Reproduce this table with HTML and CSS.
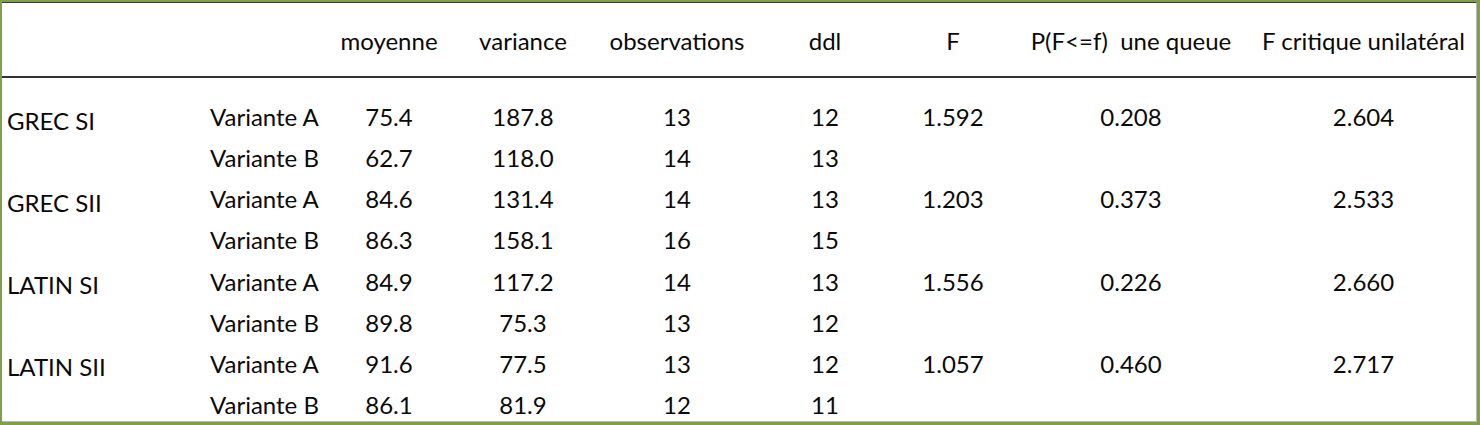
FILE: index.html
```html
<!DOCTYPE html>
<html lang="fr">
<head>
<meta charset="utf-8">
<link rel="stylesheet" href="styles.css">
</head>
<body>
<div class="frame">
  <div class="inner">
    <div class="head">
      <div class="c"></div>
      <div class="c"></div>
      <div class="c num">moyenne</div>
      <div class="c num">variance</div>
      <div class="c num">observations</div>
      <div class="c num">ddl</div>
      <div class="c num">F</div>
      <div class="c num">P(F&lt;=f)&nbsp; une queue</div>
      <div class="c num">F critique unilatéral</div>
    </div>
    <div class="body">
      <div class="c grp">GREC SI</div><div class="c">Variante A</div><div class="c num">75.4</div><div class="c num">187.8</div><div class="c num">13</div><div class="c num">12</div><div class="c num">1.592</div><div class="c num">0.208</div><div class="c num">2.604</div>
      <div class="c"></div><div class="c">Variante B</div><div class="c num">62.7</div><div class="c num">118.0</div><div class="c num">14</div><div class="c num">13</div><div class="c"></div><div class="c"></div><div class="c"></div>
      <div class="c grp">GREC SII</div><div class="c">Variante A</div><div class="c num">84.6</div><div class="c num">131.4</div><div class="c num">14</div><div class="c num">13</div><div class="c num">1.203</div><div class="c num">0.373</div><div class="c num">2.533</div>
      <div class="c"></div><div class="c">Variante B</div><div class="c num">86.3</div><div class="c num">158.1</div><div class="c num">16</div><div class="c num">15</div><div class="c"></div><div class="c"></div><div class="c"></div>
      <div class="c grp">LATIN SI</div><div class="c">Variante A</div><div class="c num">84.9</div><div class="c num">117.2</div><div class="c num">14</div><div class="c num">13</div><div class="c num">1.556</div><div class="c num">0.226</div><div class="c num">2.660</div>
      <div class="c"></div><div class="c">Variante B</div><div class="c num">89.8</div><div class="c num">75.3</div><div class="c num">13</div><div class="c num">12</div><div class="c"></div><div class="c"></div><div class="c"></div>
      <div class="c grp">LATIN SII</div><div class="c">Variante A</div><div class="c num">91.6</div><div class="c num">77.5</div><div class="c num">13</div><div class="c num">12</div><div class="c num">1.057</div><div class="c num">0.460</div><div class="c num">2.717</div>
      <div class="c"></div><div class="c">Variante B</div><div class="c num">86.1</div><div class="c num">81.9</div><div class="c num">12</div><div class="c num">11</div><div class="c"></div><div class="c"></div><div class="c"></div>
    </div>
  </div>
</div>
</body>
</html>
```
FILE: styles.css
```css
html, body {
  margin: 0;
  padding: 0;
  background: #ffffff;
}
.frame {
  width: 1480px;
  height: 425px;
  box-sizing: border-box;
  border-style: solid;
  border-color: #7fa046;
  border-width: 2px 3px 3px 2px;
  overflow: hidden;
  font-family: "Lato", "Liberation Sans", sans-serif;
  font-size: 24px;
  color: #0a0a0a;
}
.inner {
  height: 100%;
  box-sizing: border-box;
  border-top: 1px solid #3a3a3a;
  border-right: 1px solid #b8b8b8;
  border-bottom: 1px solid #b8b8b8;
  overflow: hidden;
}
.head, .body {
  display: grid;
  grid-template-columns: 208px 120px 118px 150px 158px 138px 118px 238px 227px;
}
.head {
  height: 75px;
  box-sizing: border-box;
  padding-top: 2px;
  border-bottom: 2px solid #333333;
}
.body {
  padding-top: 18px;
  grid-auto-rows: 41.15px;
}
.c {
  display: flex;
  align-items: center;
  white-space: nowrap;
}
.num {
  justify-content: center;
}
.grp {
  padding-left: 5px;
  padding-top: 7px;
}
```
